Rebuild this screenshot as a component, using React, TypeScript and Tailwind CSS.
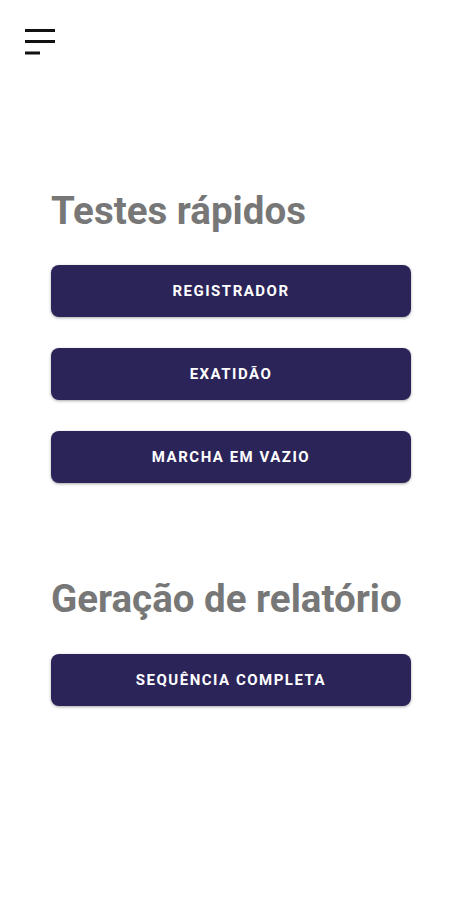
import React from "react"

const botoesRapidos = ["Registrador", "Exatidão", "Marcha em vazio"]

function MenuIcon() {
    return (
        <svg width="32" height="28" viewBox="0 0 32 28" fill="none">
            <path d="M1 3.5H31M1 14.5H31M1 26H16" stroke="#111" strokeWidth="3" />
        </svg>
    )
}

function Botao({ label }: { label: string }) {
    return (
        <button className="w-[360px] h-[52px] rounded-[8px] bg-[#2b2459] shadow-[0_1px_3px_rgba(0,0,0,0.35)] text-white text-[15px] font-bold uppercase tracking-[0.1em]">
            {label}
        </button>
    )
}

export default function App() {
    return (
        <div className="w-[461px] h-[900px] bg-white font-['Roboto',sans-serif]">
            <div className="pt-[27px] pl-[24px]">
                <MenuIcon />
            </div>

            <div className="pl-[51px] pt-[136px]">
                <h2 className="text-[38.5px] font-bold text-[#777777] leading-[40px]">Testes rápidos</h2>
                <div className="flex flex-col gap-[31px] mt-[34px]">
                    {botoesRapidos.map(b => (
                        <Botao key={b} label={b} />
                    ))}
                </div>

                <h2 className="text-[38.5px] font-bold text-[#777777] leading-[40px] mt-[96px]">Geração de relatório</h2>
                <div className="mt-[35px]">
                    <Botao label="Sequência completa" />
                </div>
            </div>
        </div>
    )
}
